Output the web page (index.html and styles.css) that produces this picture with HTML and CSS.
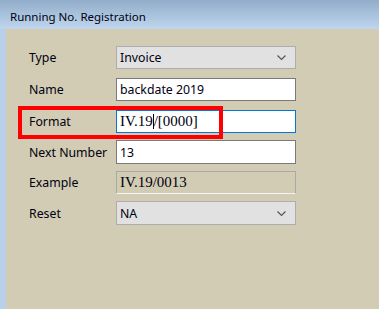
FILE: index.html
```html
<!DOCTYPE html>
<html lang="en">

<head>
    <meta charset="UTF-8">
    <meta name="viewport" content="width=device-width, initial-scale=1.0">
    <title>Running No. Registration</title>
    <link rel="stylesheet" href="styles.css">
</head>

<body>
    <div class="window">
        <!--title bar-->
        <div class="titlebar">Running No. Registration</div>

        <div class="panel">
            <div class="form">
                <div class="row loose">
                    <label>Type</label>
                    <div class="combo">
                        <span>Invoice</span>
                        <svg class="chev" width="9" height="6" viewBox="0 0 9 6"><path d="M0.5 0.5 L4.5 4.5 L8.5 0.5" fill="none" stroke="#555" stroke-width="1.2"/></svg>
                    </div>
                </div>
                <div class="row loose">
                    <label>Name</label>
                    <div class="field">backdate 2019</div>
                </div>
                <div class="row">
                    <label>Format</label>
                    <div class="field focus serif">IV.19<span class="caret"></span>/[0000]</div>
                </div>
                <div class="row tall">
                    <label>Next Number</label>
                    <div class="field">13</div>
                </div>
                <div class="row">
                    <label>Example</label>
                    <div class="field readonly serif">IV.19/0013</div>
                </div>
                <div class="row tall">
                    <label>Reset</label>
                    <div class="combo">
                        <span>NA</span>
                        <svg class="chev" width="9" height="6" viewBox="0 0 9 6"><path d="M0.5 0.5 L4.5 4.5 L8.5 0.5" fill="none" stroke="#555" stroke-width="1.2"/></svg>
                    </div>
                </div>
            </div>

            <!--red highlight drawn over the Format row-->
            <div class="mark"></div>
        </div>
    </div>
</body>

</html>
```

FILE: styles.css
```css
html,
body {
    height: 100%;
}

body {
    margin: 0;
    font-family: "Noto Sans", "Liberation Sans", sans-serif;
    font-size: 12.3px;
    color: #000010;
}

.window {
    height: 100%;
    display: flex;
    flex-direction: column;
}

.titlebar {
    height: 29px;
    box-sizing: border-box;
    padding: 9px 0 0 10px;
    font-size: 11.5px;
    line-height: 16px;
    color: #000010;
    background: linear-gradient(#92adca, #bfd6ee);
}

.panel {
    position: relative;
    flex: 1;
    background-color: #d3ccb4;
    border-left: 6px solid #b9d0ea;
}

.form {
    display: flex;
    flex-direction: column;
    gap: 7px;
    padding: 17px 0 0 23px;
}

.row {
    display: flex;
    align-items: center;
    height: 23px;
}

.row.loose {
    margin-bottom: 2px;
}

.row.tall {
    height: 24px;
}

.row label {
    width: 87px;
}

.field,
.combo {
    box-sizing: border-box;
    width: 180px;
    height: 100%;
    display: flex;
    align-items: center;
    padding-left: 3px;
    white-space: pre;
}

.field {
    background-color: #fff;
    border: 1px solid #7a7a7a;
}

.field.focus {
    border-color: #0078d7;
}

.field.readonly {
    background-color: #d3ccb4;
    border: 1px solid #a9a9a9;
    border-bottom-color: #f4f4f4;
}

.serif {
    font-family: "Liberation Serif", serif;
    font-size: 15px;
}

.caret {
    display: inline-block;
    width: 1px;
    height: 15px;
    background-color: #000;
}

.combo {
    justify-content: space-between;
    padding-right: 9px;
    background-color: #e1e1e1;
    border: 1px solid #adadad;
}

.chev {
    margin-top: 1px;
}

.mark {
    position: absolute;
    left: 12px;
    top: 77px;
    width: 197px;
    height: 25px;
    border: 4px solid #f00;
}
```
